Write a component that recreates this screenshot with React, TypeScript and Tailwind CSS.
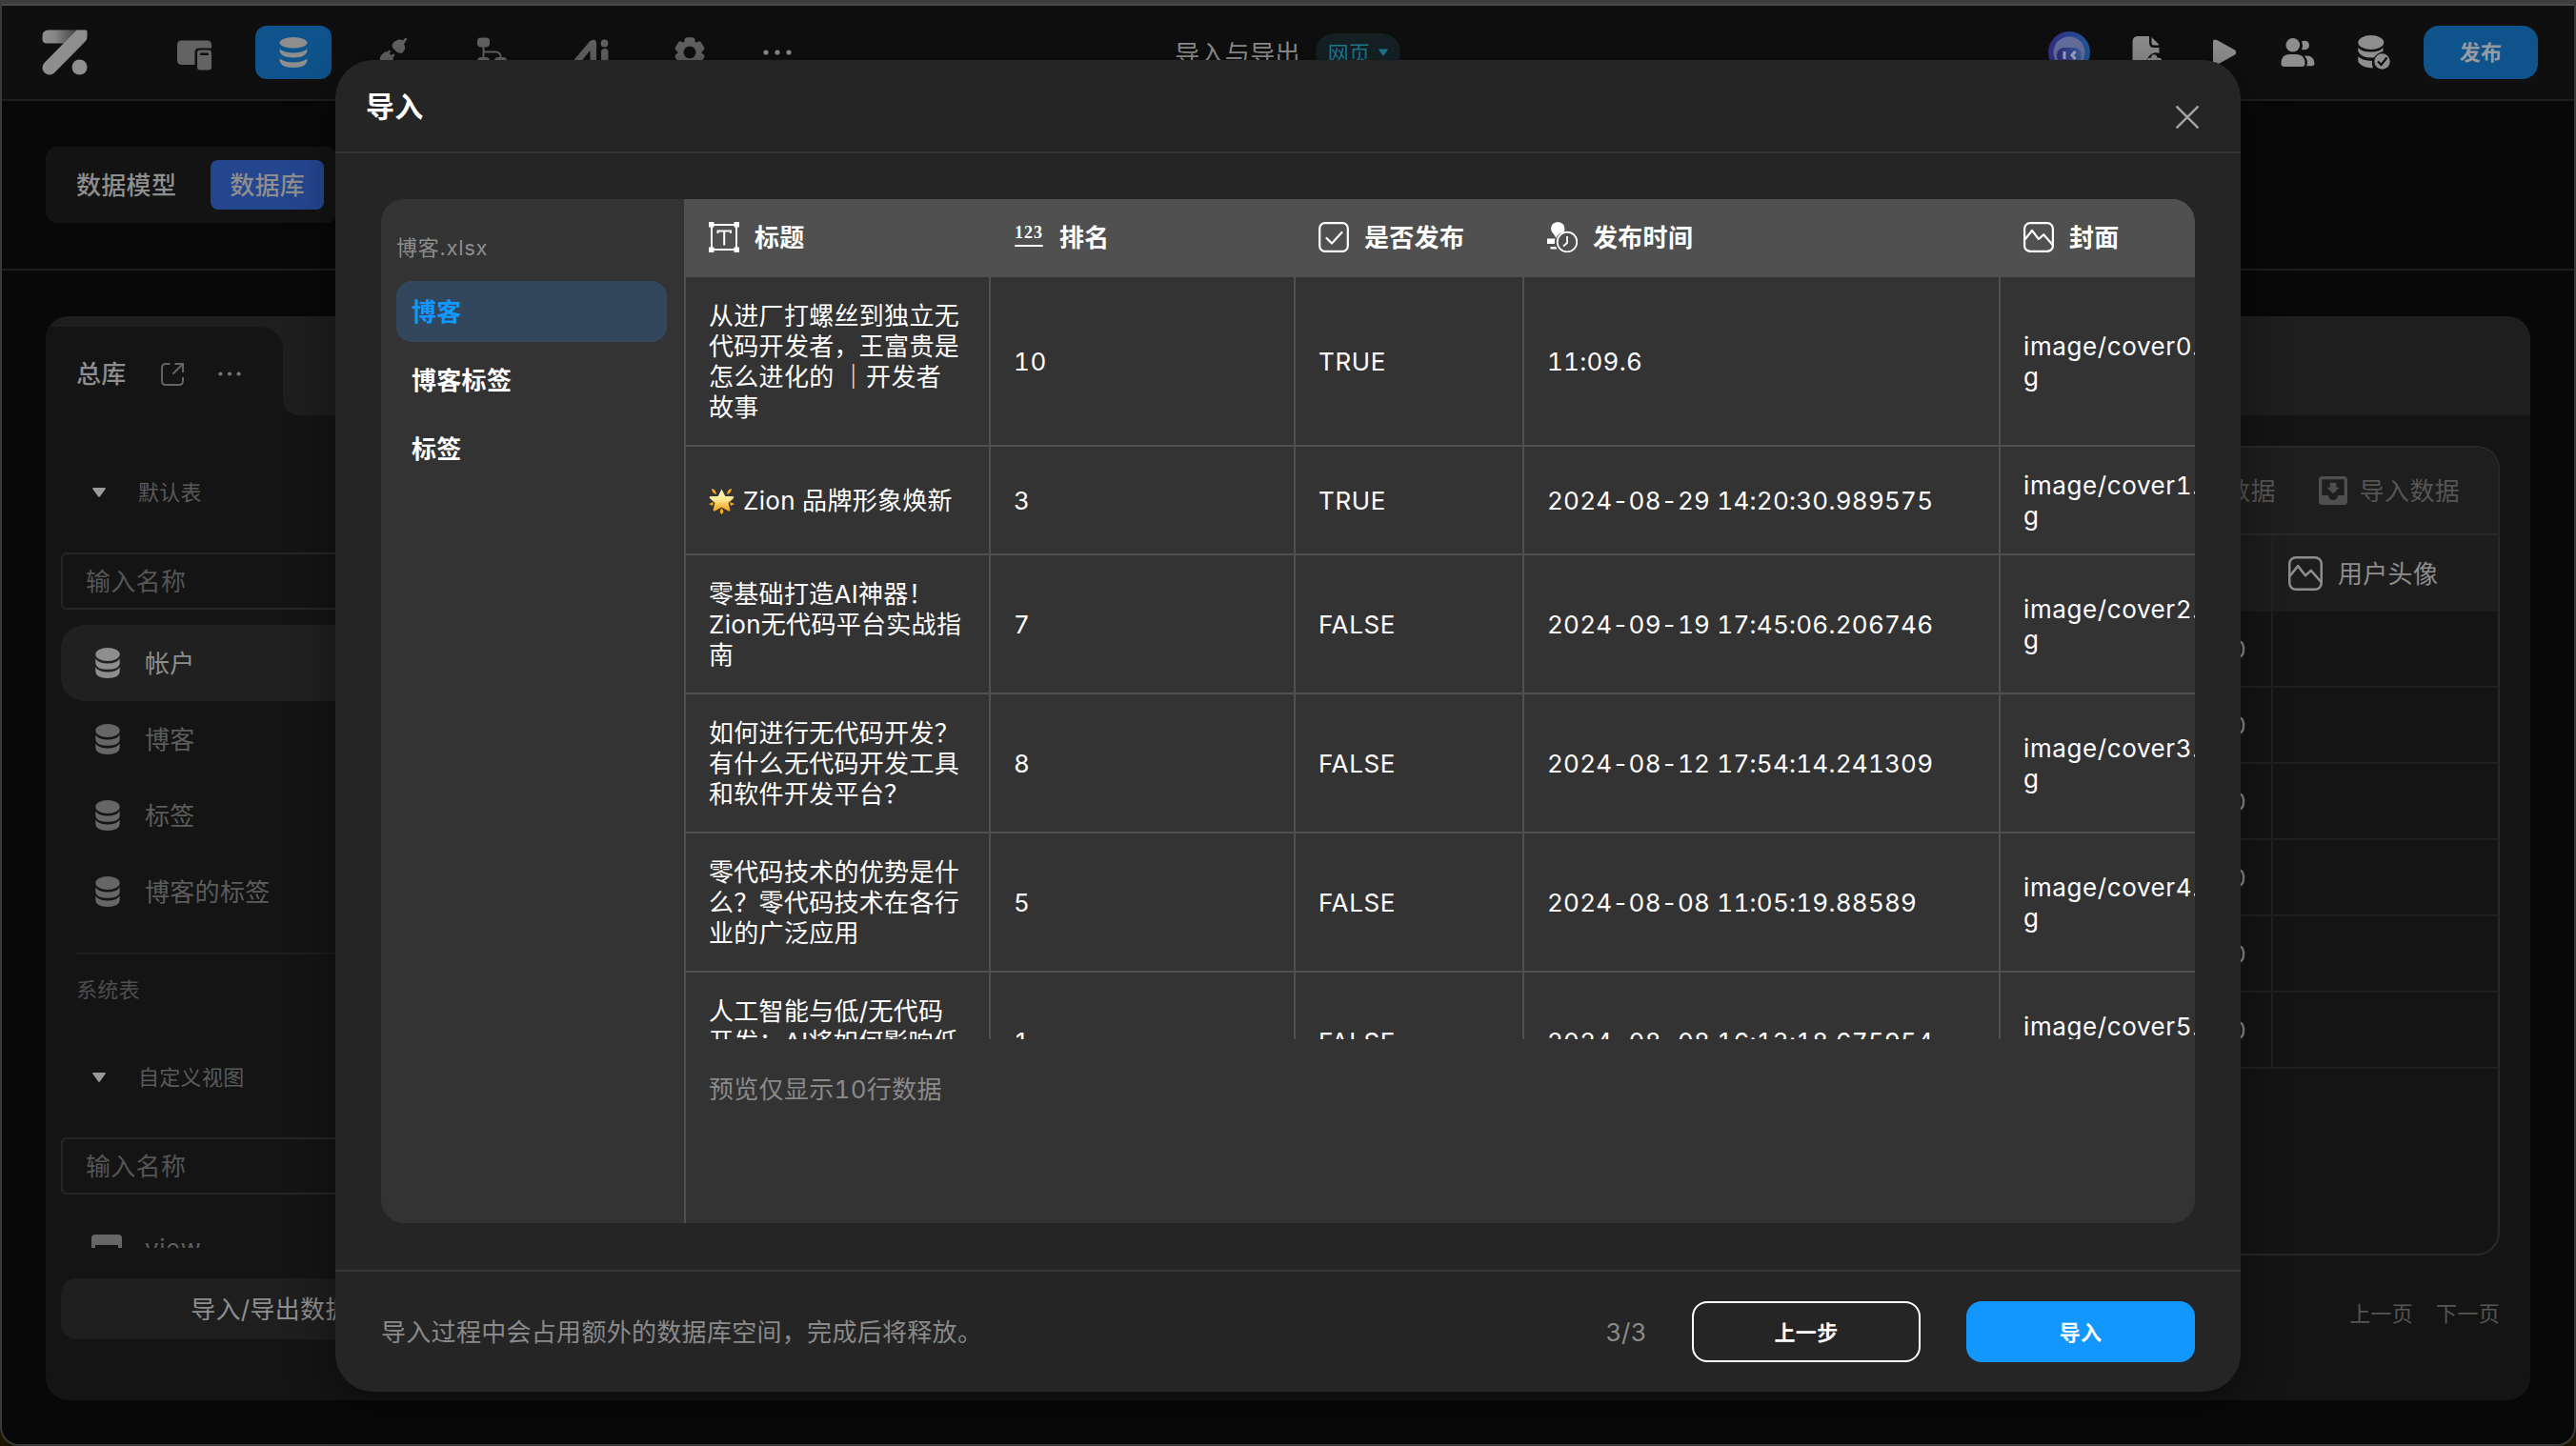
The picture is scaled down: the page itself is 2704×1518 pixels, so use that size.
import type { ReactNode } from 'react';
import { MdMoveToInbox } from 'react-icons/md';

const tables = ['帐户', '博客', '标签', '博客的标签'];
const sheets = ['博客', '博客标签', '标签'];

const rows = [
  { title: '从进厂打螺丝到独立无\n代码开发者，王富贵是\n怎么进化的 ｜开发者\n故事', rank: '10', published: 'TRUE', time: '11:09.6', cover: 'image/cover0.\ng' },
  { star: true, title: 'Zion 品牌形象焕新', rank: '3', published: 'TRUE', time: '2024-08-29 14:20:30.989575', cover: 'image/cover1.\ng' },
  { title: '零基础打造AI神器！\nZion无代码平台实战指\n南', rank: '7', published: 'FALSE', time: '2024-09-19 17:45:06.206746', cover: 'image/cover2.\ng' },
  { title: '如何进行无代码开发？\n有什么无代码开发工具\n和软件开发平台？', rank: '8', published: 'FALSE', time: '2024-08-12 17:54:14.241309', cover: 'image/cover3.\ng' },
  { title: '零代码技术的优势是什\n么？零代码技术在各行\n业的广泛应用', rank: '5', published: 'FALSE', time: '2024-08-08 11:05:19.88589', cover: 'image/cover4.\ng' },
  { title: '人工智能与低/无代码\n开发：AI将如何影响低\n代码行业', rank: '1', published: 'FALSE', time: '2024-08-08 16:13:18.675954', cover: 'image/cover5.\ng' },
];

const cols = 'grid grid-cols-[320px_320px_240px_500px_206px]';

function Logo() {
  return (
    <svg className="h-12 w-12" viewBox="0 0 48 48">
      <defs>
        <linearGradient id="logo" x1="0" x2="1" y1="0" y2="0">
          <stop offset="0" stopColor="#8e8e8e" />
          <stop offset="0.35" stopColor="#868686" />
          <stop offset="1" stopColor="#3c3c3c" />
        </linearGradient>
      </defs>
      <path d="M7 0.5H38L23 14.5H5Q0.5 14.5 0.5 10V7Q0.5 0.5 7 0.5Z" fill="url(#logo)" />
      <path d="M36.5 0.5H46Q47.5 0.5 47.5 2V8Q47.5 10.5 46 12L13 45.5Q9.5 48.5 5.5 47Q0.5 45 0.5 40Q0.5 37 2.5 35Z" fill="#8e8e8e" />
      <circle cx="39.5" cy="39.5" r="8" fill="#8e8e8e" />
    </svg>
  );
}

function DevicesIcon() {
  return (
    <svg className="h-8 w-9" viewBox="0 0 36 32" fill="#636363">
      <path d="M5 0.5H31Q36 0.5 36 5.5V8.5H23Q18.5 8.5 18.5 13V26H5Q0 26 0 21V5.5Q0 0.5 5 0.5Z" />
      <path fillRule="evenodd" d="M24 10.5H33Q36 10.5 36 13.5V28.5Q36 31.5 33 31.5H24Q21 31.5 21 28.5V13.5Q21 10.5 24 10.5ZM25 13.5Q24 13.5 24 14.8Q24 16.1 25 16.1H32Q33 16.1 33 14.8Q33 13.5 32 13.5Z" />
    </svg>
  );
}

function ActiveDbIcon() {
  return (
    <svg className="h-8 w-[30px]" viewBox="0 0 30 32" fill="#8e8e8e">
      <ellipse cx="15" cy="5.8" rx="14.5" ry="5.8" />
      <path d="M0.5 12.5Q6 16.5 15 16.5T29.5 12.5Q30 21.5 15 21.5T0.5 12.5Z" />
      <path d="M0.5 22.5Q6 26.5 15 26.5T29.5 22.5Q30 32 15 32T0.5 22.5Z" />
    </svg>
  );
}

function DbIcon({ className }: { className?: string }) {
  return (
    <svg className={`h-8 w-[26px] shrink-0 ${className}`} viewBox="0 0 26 32" fill="currentColor">
      <ellipse cx="13" cy="7" rx="12.7" ry="7" />
      <path d="M0.3 11.5Q4 16.5 13 16.5T25.7 11.5V16.5Q25 22.8 13 22.8T0.3 16.5Z" />
      <path d="M0.3 20.5Q4 25.5 13 25.5T25.7 20.5V25.5Q25 32 13 32T0.3 25.5Z" />
    </svg>
  );
}

function PlugIcon() {
  return (
    <svg className="h-8 w-8" viewBox="0 0 32 32" fill="#636363">
      <path d="M28.5 0.5L30.5 2L27 7Q30 12 25.5 16.5Q22 17.5 19.5 15.5L15 11Q13.5 7 17.5 4.5Q22 1 26 3.5Z" />
      <path d="M4 18Q7 14.5 9.5 15.5L11.5 13.5L13.5 15L11.7 17L14 19.3L16 17L17.5 19L15.5 21.5Q17 25 13 28.5Q8 31 5 29L2 32L0.5 30.5L3 27Q0 22 4 18Z" />
    </svg>
  );
}

function FlowIcon() {
  return (
    <svg className="h-8 w-8" viewBox="0 0 32 32" fill="#636363">
      <rect x="1" y="0.5" width="13" height="10" rx="4" />
      <path d="M7.5 10V22M7.5 15.5H20Q25.5 15.5 25.5 21" fill="none" stroke="#636363" strokeWidth="2" />
      <rect x="1" y="21" width="13" height="10" rx="4" />
      <rect x="19" y="21" width="13" height="10" rx="4" />
    </svg>
  );
}

function AiIcon() {
  return (
    <svg className="h-8 w-10" viewBox="0 0 40 32" fill="#636363">
      <path d="M19.5 4Q25.5 0.5 26 6V30H19.5V14L7 29L1.5 25Z" />
      <circle cx="34.5" cy="6.5" r="3.9" />
      <rect x="31" y="12" width="7.5" height="20" rx="3.7" />
    </svg>
  );
}

function GearIcon() {
  return (
    <svg className="h-8 w-8" viewBox="0 0 32 32">
      <g fill="#636363">
        {[0, 60, 120, 180, 240, 300].map((a) => (
          <rect key={a} x="10.5" y="0.3" width="11" height="9" rx="3" transform={`rotate(${a} 16 16)`} />
        ))}
      </g>
      <circle cx="16" cy="16" r="9.5" fill="none" stroke="#636363" strokeWidth="6" />
    </svg>
  );
}

function BotIcon() {
  return (
    <svg className="h-11 w-11" viewBox="0 0 44 44">
      <defs>
        <linearGradient id="bot" x1="0" x2="1" y1="0.3" y2="0.5">
          <stop offset="0" stopColor="#352d84" />
          <stop offset="1" stopColor="#1e5c9c" />
        </linearGradient>
        <linearGradient id="face" x1="0" x2="1" y1="0" y2="0">
          <stop offset="0" stopColor="#302c80" />
          <stop offset="1" stopColor="#3a62a0" />
        </linearGradient>
      </defs>
      <circle cx="22" cy="22" r="22" fill="url(#bot)" />
      <circle cx="22" cy="22" r="16.5" fill="#6870a0" />
      <rect x="9" y="17" width="26" height="17" rx="8" fill="url(#face)" />
      <path d="M17 21V29M28.5 21L25 25L28.5 29" fill="none" stroke="#a6aacb" strokeWidth="3" />
    </svg>
  );
}

function DocGearIcon() {
  return (
    <svg className="h-9 w-8" viewBox="0 0 32 36" fill="#8e8e8e">
      <path d="M6 1H18V8Q18 13 23 13H28.5V19Q24 17 20 20Q14 24 14 34H6Q0.5 34 0.5 28V7Q0.5 1 6 1Z" />
      <path d="M20.5 2L28 9.5V10.5H23Q20.5 10.5 20.5 8Z" />
      <path fillRule="evenodd" d="M21 20.5H25L26.5 23.5L30 24L32 27.5L30 31L26 35H20L16 31L14.5 27L17 24L20 23.5ZM23 26A4 4 0 1 0 23.1 26Z" />
    </svg>
  );
}

function PeopleIcon() {
  return (
    <svg className="h-[30px] w-9" viewBox="0 0 36 30" fill="#8e8e8e">
      <circle cx="12.8" cy="7.3" r="7.3" />
      <path d="M9 17H16.5Q25.5 17 25.5 27Q25.5 30 22 30H4Q0.5 30 0.5 27Q0.5 17 9 17Z" />
      <path d="M22 3.2Q29.5 1 30 7.5Q29.5 13.5 22 12Q24 7.5 22 3.2Z" />
      <path d="M25 18.5Q35.5 17.5 35.5 27Q35 29.5 31 29.3H27Q30 25 25 18.5Z" />
    </svg>
  );
}

function DbCheckIcon() {
  return (
    <svg className="h-9 w-[34px]" viewBox="0 0 34 36">
      <g fill="#8e8e8e">
        <ellipse cx="13.8" cy="7.5" rx="13.5" ry="7.5" />
        <path d="M0.3 13Q4 17.5 13.5 17.5T26.5 13V17Q20 18.5 17 23.5Q4 24.5 0.3 17Z" />
        <path d="M0.3 22.5Q5 26.5 15 27Q14.5 31 16 34.5Q5 34.5 0.3 28Z" />
      </g>
      <circle cx="25.5" cy="27.5" r="8.2" fill="#8e8e8e" />
      <path d="M21 27.5L24.5 31L30.5 23.5" fill="none" stroke="#0f0f0f" strokeWidth="2.2" />
    </svg>
  );
}

function ExternalIcon() {
  return (
    <svg className="h-6 w-6" viewBox="0 0 24 24" fill="none" stroke="#636363" strokeWidth="2">
      <path d="M9.5 1H5Q1 1 1 5V19Q1 23 5 23H19Q23 23 23 19V15" />
      <path d="M14.5 1H23V10M23 1L12.5 11.5" />
    </svg>
  );
}

function Dots({ className }: { className?: string }) {
  return (
    <svg className={className} viewBox="0 0 30 6" fill="currentColor">
      <circle cx="3" cy="3" r="2.6" />
      <circle cx="15" cy="3" r="2.6" />
      <circle cx="27" cy="3" r="2.6" />
    </svg>
  );
}

function Triangle({ className }: { className?: string }) {
  return (
    <svg className={className} viewBox="0 0 14 10" fill="currentColor">
      <path d="M1 0H13Q14.5 0 13.5 1.5L8 9.2Q7 10.5 6 9.2L0.5 1.5Q-0.5 0 1 0Z" />
    </svg>
  );
}

function TextIcon() {
  return (
    <svg className="h-8 w-8" viewBox="0 0 32 32" fill="none" stroke="#fff" strokeWidth="2">
      <rect x="3" y="3" width="26" height="26" />
      <path d="M9.5 12V9.5H23V12M16.2 9.5V24.5" />
      <g fill="#fff" stroke="none">
        <rect width="5.5" height="5.5" />
        <rect x="26.5" width="5.5" height="5.5" />
        <rect y="26.5" width="5.5" height="5.5" />
        <rect x="26.5" y="26.5" width="5.5" height="5.5" />
      </g>
    </svg>
  );
}

function NumberIcon() {
  return (
    <div className="flex h-8 w-8 flex-col items-center pt-[3px] text-white">
      <span className="h-[16px] font-['Liberation_Serif'] text-[18px] leading-[16px] font-bold tracking-[1px]">123</span>
      <span className="mt-[5px] h-[2px] w-[30px] rounded bg-white" />
    </div>
  );
}

function CheckIcon() {
  return (
    <svg className="h-8 w-8" viewBox="0 0 32 32" fill="none" stroke="#fff" strokeWidth="2.2" strokeLinecap="round" strokeLinejoin="round">
      <rect x="1.2" y="1.2" width="29.6" height="29.6" rx="5.5" />
      <path d="M8.5 17L14 22.5L24.5 11" />
    </svg>
  );
}

function TimeIcon() {
  return (
    <svg className="h-8 w-8" viewBox="0 0 32 32">
      <path d="M11 0Q18.5 0.5 18.5 7.5Q18.5 9 17.5 10.5Q11 12 9.5 17L7 13Q4 10 4 7Q4.5 0.5 11 0Z" fill="#fff" />
      <path d="M0 17.5H8.5Q7.5 20 8 23H0ZM3.5 26H9L10.5 28.5H3.5Z" fill="#fff" />
      <circle cx="21" cy="21" r="10.3" fill="none" stroke="#fff" strokeWidth="1.8" />
      <path d="M21 15V22L17 25.5" fill="none" stroke="#fff" strokeWidth="1.8" />
    </svg>
  );
}

function ImageIcon({ className }: { className?: string }) {
  return (
    <svg className={className} viewBox="0 0 32 32" fill="none" stroke="currentColor" strokeWidth="2.2" strokeLinejoin="round">
      <rect x="1.1" y="1.1" width="29.8" height="29.8" rx="6" />
      <path d="M1.5 18.5L9 9L16 18L21.2 13.2L31 24.5" />
    </svg>
  );
}

// glowing star emoji
function Star() {
  return (
    <svg className="mr-[9px] h-7 w-[27px]" viewBox="0 0 27 28">
      <defs>
        <linearGradient id="star" x1="0" x2="0" y1="0" y2="1">
          <stop offset="0" stopColor="#fff7c8" />
          <stop offset="0.5" stopColor="#fde58a" />
          <stop offset="1" stopColor="#f59a12" />
        </linearGradient>
      </defs>
      <path d="M3 1Q7 1 8 7Q3.5 6 3 1ZM24 1Q20 1 19 7Q23.5 6 24 1ZM13.5 21.5Q17 25 13.5 28Q10 25 13.5 21.5ZM0 17L5 15L4 19ZM27 17L22 15L23 19Z" fill="#f7ac1e" />
      <path d="M13.5 1.5L17.3 9H25.5Q27 10 25.5 11.5L20.5 16L22.5 23.5Q22 25 20.5 24.5L13.5 20.5L6.5 24.5Q5 25 4.5 23.5L6.5 16L1.5 11.5Q0 10 1.5 9H9.7Z" fill="url(#star)" />
    </svg>
  );
}

function HeaderCell({ icon, label }: { icon: ReactNode; label: string }) {
  return (
    <div className="flex items-center gap-4 pb-[2px] pl-[26px] whitespace-nowrap">
      {icon}
      <span className="text-[26px] font-bold">{label}</span>
    </div>
  );
}

function Cell({ children }: { children: ReactNode }) {
  return (
    <div className="flex items-center border-b-2 border-l-2 border-[#505050] pt-[25px] pb-[23px] pl-6 tracking-[0.6px] whitespace-pre tabular-nums first:tracking-[0.3px]">
      {children}
    </div>
  );
}

function TopBar() {
  return (
    <header className="flex h-[100px] shrink-0 items-start justify-between border-b-2 border-[#1e1e1e] bg-[#0f0f0f] pr-[38px] pl-[42px]">
      <div className="flex h-[98px] items-center">
        <Logo />
        <div className="mt-[5px] ml-[94px]"><DevicesIcon /></div>
        <div className="ml-[46px] flex h-14 w-20 items-center justify-center rounded-xl bg-[#0f538c]">
          <ActiveDbIcon />
        </div>
        <div className="ml-[49px]"><PlugIcon /></div>
        <div className="ml-[71px]"><FlowIcon /></div>
        <div className="ml-[68px]"><AiIcon /></div>
        <div className="ml-[68px]"><GearIcon /></div>
        <Dots className="ml-[61px] h-[6px] w-[30px] text-[#8e8e8e]" />
      </div>
      <div className="mr-[278px] flex h-[98px] items-center">
        <span className="mt-[2px] text-[26px] text-[#8e8e8e]">导入与导出</span>
        <div className="ml-4 flex h-10 w-[89px] items-center rounded-full bg-[#152125] pl-[13px] text-[22px] text-[#1e7b90]">
          <span className="mt-[2px]">网页</span>
          <Triangle className="ml-[9px] h-[8px] w-[10px]" />
        </div>
      </div>
      <div className="flex h-[98px] items-center">
        <BotIcon />
        <div className="ml-11"><DocGearIcon /></div>
        <svg className="ml-[52px] h-7 w-[26px]" viewBox="0 0 26 28" fill="#8e8e8e">
          <path d="M1 2Q2 -0.5 5 1L24 11.5Q26.5 14 24 16.5L5 27Q2 28.5 1 26Z" />
        </svg>
        <div className="ml-[46px]"><PeopleIcon /></div>
        <div className="ml-[45px]"><DbCheckIcon /></div>
        <div className="ml-[35px] flex h-14 w-[120px] items-center justify-center rounded-2xl bg-[#0f538c] text-[22px] font-bold text-[#959ba0]">
          发布
        </div>
      </div>
    </header>
  );
}

function SearchInput() {
  return (
    <div className="flex h-[60px] items-center rounded-md border-2 border-[#262626] pl-6 text-[26px] text-[#555]">
      输入名称
    </div>
  );
}

function Sidebar() {
  return (
    <aside className="flex w-[474px] flex-col px-4">
      <div className="mt-[41px] flex h-[80px] items-center pl-[33px] text-[22px] text-[#5a5a5a]">
        <Triangle className="h-[10px] w-[14px] text-[#9a9a9a]" />
        <span className="ml-[34px]">默认表</span>
      </div>
      <div className="mt-[23px]"><SearchInput /></div>
      <div className="mt-4">
        {tables.map((name, i) => (
          <div
            key={name}
            className={`flex h-20 items-center gap-[26px] rounded-3xl pl-9 text-[26px] ${i === 0 ? 'bg-[#202020] text-[#8e8e8e]' : 'text-[#5c5c5c]'}`}
          >
            <DbIcon className={i === 0 ? 'text-[#8e8e8e]' : 'text-[#666]'} />
            {name}
          </div>
        ))}
      </div>
      <div className="mt-6 ml-4 border-t-2 border-[#1e1e1e] pt-[21px] text-[22px] leading-8 text-[#4d4d4d]">系统表</div>
      <div className="mt-[37px] flex h-[78px] items-center pl-[33px] text-[22px] text-[#5a5a5a]">
        <Triangle className="h-[10px] w-[14px] text-[#9a9a9a]" />
        <span className="ml-[34px]">自定义视图</span>
      </div>
      <div className="mt-[24px]"><SearchInput /></div>
      <div className="mt-4 flex h-10 items-start overflow-hidden pt-[26px] pl-8 text-[26px] text-[#5c5c5c]">
        <div className="h-8 w-8 shrink-0 rounded border-4 border-t-[11px] border-[#666]" />
        <span className="-mt-[1px] ml-6 leading-8 tracking-[0.6px]">view</span>
      </div>
      <div className="mt-8 flex h-16 items-center justify-center rounded-2xl bg-[#1e1e1e] pr-[2px] text-[26px] text-[#8e8e8e]">
        导入/导出数据
      </div>
    </aside>
  );
}

function AccountTable() {
  return (
    <section className="flex flex-1 flex-col pt-8 pr-8">
      <div className="h-[850px] overflow-hidden rounded-3xl border-2 border-[#282828]">
        <div className="flex h-[92px] items-center justify-end border-b-2 border-[#292929] bg-[#1e1e1e] pr-10 text-[26px] text-[#555]">
          <span>导出数据</span>
          <MdMoveToInbox className="ml-[40px] h-10 w-10 text-[#4f4f4f]" />
          <span className="ml-[8px]">导入数据</span>
        </div>
        <div className="flex h-20 items-center justify-end bg-[#1d1d1d] text-[26px] text-[#8e8e8e]">
          <div className="flex h-20 w-[238px] items-center border-l-2 border-[#202020] pl-4">
            <ImageIcon className="h-9 w-9" />
            <span className="ml-4">用户头像</span>
          </div>
        </div>
        {[0, 1, 2, 3, 4, 5].map((i) => (
          <div key={i} className="flex h-20 justify-end border-b-2 border-[#202020] text-[26px] text-[#8e8e8e]">
            <span className="self-center pr-[26px]">0</span>
            <div className="w-[238px] border-l-2 border-[#202020]" />
          </div>
        ))}
      </div>
      <div className="mt-[41px] flex justify-end gap-6 text-[22px] leading-10 text-[#555]">
        <span>上一页</span>
        <span>下一页</span>
      </div>
    </section>
  );
}

function Workspace() {
  return (
    <div className="mx-[46px] mt-12 h-[1138px] overflow-hidden rounded-3xl bg-[#141414]">
      <div className="flex h-[104px] items-end bg-[#1e1e1e]">
        <div className="flex h-[93px] w-[249px] items-center rounded-tr-3xl bg-[#141414] pt-[6px] pl-8 text-[26px] font-medium text-[#8e8e8e]">
          <span>总库</span>
          <div className="ml-[36px]"><ExternalIcon /></div>
          <Dots className="ml-[36px] h-[5px] w-6 text-[#777]" />
        </div>
        <div className="h-4 w-4 bg-[#141414]">
          <div className="h-4 w-4 rounded-bl-2xl bg-[#1e1e1e]" />
        </div>
      </div>
      <div className="flex">
        <Sidebar />
        <AccountTable />
      </div>
    </div>
  );
}

function ImportModal() {
  return (
    <div className="absolute top-[63px] left-[352px] flex h-[1398px] w-[2000px] flex-col rounded-[40px] bg-[#252525] shadow-[0_12px_48px_rgba(0,0,0,0.4)]">
      <div className="flex h-[98px] items-center justify-between border-b-2 border-[#363636] pr-[44px] pl-8">
        <h2 className="mt-[3px] text-[30px] font-bold text-white">导入</h2>
        <svg className="mt-[24px] h-6 w-6" viewBox="0 0 24 24" stroke="#a3a3a3" strokeWidth="2.4">
          <path d="M0.5 0.5L23.5 23.5M23.5 0.5L0.5 23.5" />
        </svg>
      </div>

      <div className="mx-12 mt-12 flex h-[1075px] overflow-hidden rounded-3xl bg-[#333]">
        <div className="w-[318px] pt-[35px] pr-[18px] pl-4">
          <div className="text-[22px] leading-8 tracking-[0.7px] text-[#8d8d8d]">博客.xlsx</div>
          <div className="mt-[19px] flex flex-col gap-2">
            {sheets.map((name, i) => (
              <div
                key={name}
                className={`flex h-16 items-center rounded-2xl pl-4 text-[26px] font-bold ${i === 0 ? 'bg-[#33475c] text-[#1297ff]' : 'text-white'}`}
              >
                {name}
              </div>
            ))}
          </div>
        </div>
        <div className="flex w-[1586px] flex-col text-white">
          <div className={`${cols} h-[82px] shrink-0 bg-[#505050]`}>
            <HeaderCell icon={<TextIcon />} label="标题" />
            <HeaderCell icon={<NumberIcon />} label="排名" />
            <HeaderCell icon={<CheckIcon />} label="是否发布" />
            <HeaderCell icon={<TimeIcon />} label="发布时间" />
            <HeaderCell icon={<ImageIcon className="h-8 w-8" />} label="封面" />
          </div>
          <div className="h-[800px] shrink-0 overflow-hidden text-[26px] leading-8">
            {rows.map((row) => (
              <div key={row.time} className={cols}>
                <Cell>{row.star && <Star />}{row.title}</Cell>
                <Cell>{row.rank}</Cell>
                <Cell>{row.published}</Cell>
                <Cell><span className="tracking-[0.25px]">{row.time}</span></Cell>
                <Cell>{row.cover}</Cell>
              </div>
            ))}
          </div>
          <div className="flex-1 border-l-2 border-[#505050] pt-[37px] pl-6 text-[26px] leading-8 tabular-nums text-[#8a8a8a]">
            预览仅显示10行数据
          </div>
        </div>
      </div>

      <div className="mt-[49px] flex flex-1 items-center border-t-2 border-[#363636] px-12 text-[26px] text-[#8a8a8a]">
        <span>导入过程中会占用额外的数据库空间，完成后将释放。</span>
        <span className="mr-12 ml-auto">3/3</span>
        <button className="h-16 w-60 rounded-2xl border-2 border-white pt-[2px] text-[22px] font-bold text-white">上一步</button>
        <button className="ml-12 h-16 w-60 rounded-2xl bg-[#1297ff] pt-[2px] text-[22px] font-bold text-white">导入</button>
      </div>
    </div>
  );
}

export default function App() {
  return (
    <div className="relative h-[1518px] w-[2704px] overflow-hidden bg-[#1c1600] font-['Inter','Noto_Sans_CJK_SC',sans-serif] tracking-[0.3px]">
      <div className="flex h-[1518px] flex-col overflow-hidden rounded-b-[20px] border-x-2 border-b-2 border-[#3a3a3a] bg-[#080808]">
        <div className="h-[6px] shrink-0 border-b-2 border-[#4a4a4a] bg-[#3d3d3d]" />
        <TopBar />
        <div className="h-[178px] shrink-0 border-b-2 border-[#1e1e1e] pt-12 pl-[46px]">
          <div className="flex h-20 w-[306px] items-center rounded-xl bg-[#131313] pl-8 text-[26px] font-medium text-[#8e8e8e]">
            <span>数据模型</span>
            <div className="ml-[36px] flex h-[52px] w-[119px] shrink-0 items-center justify-center rounded-lg bg-[#24468f]">数据库</div>
          </div>
        </div>
        <Workspace />
      </div>
      <ImportModal />
    </div>
  );
}
